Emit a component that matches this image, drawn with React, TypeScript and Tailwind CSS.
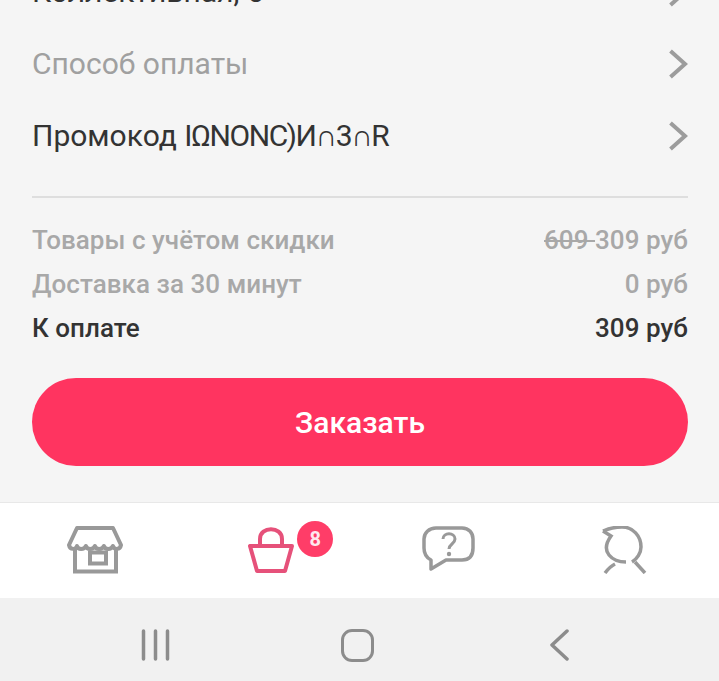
import React from "react";

const Chevron = () => (
  <svg width="22" height="32" viewBox="0 0 22 32" fill="none" className="shrink-0">
    <path d="M3.5 3 L18 16 L3.5 29" stroke="#9c9c9c" strokeWidth="4" />
  </svg>
);

const Row = ({ label, muted, children }: { label?: string; muted?: boolean; children?: React.ReactNode }) => (
  <div className="flex h-[72px] items-center justify-between pr-[30px]">
    <div className={`text-[30px] leading-none ${muted ? "text-[#a0a0a0]" : "text-[#333333]"}`}>{label}{children}</div>
    <Chevron />
  </div>
);

const Summary = ({ label, value, dark, old }: { label: string; value: string; dark?: boolean; old?: string }) => (
  <div className={`flex h-[44px] items-center justify-between pt-[1px] text-[26px] font-medium tracking-[0.05px] ${dark ? "text-[#333333]" : "text-[#a8a8a8]"}`}>
    <span>{label}</span>
    <span>
      {old && <span className="line-through">{old + " "}</span>}
      {value}
    </span>
  </div>
);

export default function App() {
  return (
    <div className="flex h-[681px] w-[719px] flex-col overflow-hidden bg-[#f5f5f5] font-['Roboto',sans-serif]">
      <div className="-mt-[44px] flex h-[546px] shrink-0 flex-col pl-8">
        <Row label="Коллективная, 5" />
        <Row label="Способ оплаты" muted />
        <Row label="Промокод ">
          <span className="tracking-[-1.4px]">IΩNONC)И∩3∩R</span>
        </Row>
        <div className="mt-[24px] mr-[31px] h-[2px] bg-[#dedede]" />
        <div className="mt-[20px] mr-[31px] flex flex-col">
          <Summary label="Товары с учётом скидки" old="609" value="309 руб" />
          <Summary label="Доставка за 30 минут" value="0 руб" />
          <Summary label="К оплате" value="309 руб" dark />
        </div>
        <button className="mt-[28px] mr-[31px] flex h-[88px] items-center justify-center rounded-[44px] bg-[#ff3460] pt-[1px] text-[30px] font-medium text-white">
          Заказать
        </button>
      </div>

      <div className="flex h-[96px] shrink-0 items-center justify-between border-t border-[#e8e8e8] bg-white pr-[71px] pl-[67px] pb-[1px]">
        <svg width="56" height="48" viewBox="0 0 56 48" fill="none">
          <path d="M10 2 H46 L54 19 C53 24 47 24 46 20 C44 24 38 24 37 20 C35 24 29 24 28 20 C26 24 20 24 19 20 C17 24 11 24 10 20 C9 24 3 24 2 19 Z" stroke="#999999" strokeWidth="4" strokeLinejoin="round" />
          <path d="M8 23 V45.5 H49 V23" stroke="#999999" strokeWidth="4" />
          <rect x="23" y="26.5" width="16" height="11" stroke="#999999" strokeWidth="4" />
        </svg>

        <div className="relative -ml-[2px] flex h-[48px] w-[48px] items-center justify-center">
          <svg width="48" height="48" viewBox="0 0 48 48" fill="none">
            <path d="M13 18 V13 C13 0 35 0 35 13 V18" stroke="#e6517a" strokeWidth="4" />
            <path d="M3 20 H45 L38 45 H10 Z" stroke="#e6517a" strokeWidth="4" strokeLinejoin="round" />
          </svg>
          <span className="absolute -top-[5px] left-[50px] flex h-[36px] w-[36px] items-center justify-center rounded-full bg-[#ff3d68] text-[20px] font-bold text-[#ffe8ee]">8</span>
        </div>

        <svg width="54" height="48" viewBox="0 0 54 48" fill="none">
          <path d="M14 2 H40 C47 2 51 7 51 13 V22 C51 30 47 34 40 34 H24 L9 43 V34 C5 32 2 28 2 22 V13 C2 7 7 2 14 2 Z" stroke="#999999" strokeWidth="3.5" strokeLinejoin="round" />
          <path d="M21 13 C21 6 33 6 33 13 C33 18 27 18 27 23" stroke="#999999" strokeWidth="3" />
          <circle cx="27" cy="28" r="2.2" fill="#999999" />
        </svg>

        <svg width="46" height="48" viewBox="0 0 46 48" fill="none">
          <path d="M1 5 C8 2 14 1 20 1 C31 1 39 10 39 21 C39 27 35 33 30 36" stroke="#999999" strokeWidth="3.5" />
          <path d="M1 5 L9 10 C4 17 3 24 7 29 C11 34 17 36 24 36" stroke="#999999" strokeWidth="3.5" />
          <path d="M3 47 C6 43 9 40 13 38 M33 36 L43 47" stroke="#999999" strokeWidth="3.5" />
        </svg>
      </div>

      <div className="flex flex-1 items-center justify-between bg-[#f1f1f1] pt-[11px] pr-[150px] pl-[141px]">
        <svg width="30" height="32" viewBox="0 0 30 32" fill="none">
          <path d="M2.5 2 V30 M14.5 2 V30 M26.5 2 V30" stroke="#8c8c8c" strokeWidth="3.5" strokeLinecap="round" />
        </svg>
        <div className="-ml-[5px] h-[33px] w-[33px] rounded-[11px] border-[3.5px] border-[#8c8c8c]" />
        <svg width="20" height="32" viewBox="0 0 20 32" fill="none">
          <path d="M18 2 L3 16 L18 30" stroke="#8c8c8c" strokeWidth="3.5" strokeLinecap="round" strokeLinejoin="round" />
        </svg>
      </div>
    </div>
  );
}
